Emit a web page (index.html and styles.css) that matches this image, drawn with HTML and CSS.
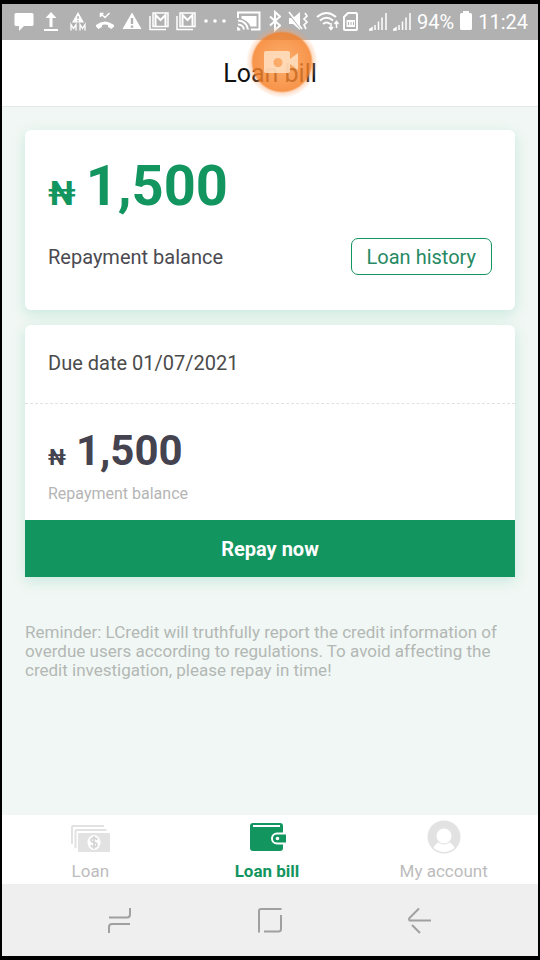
FILE: index.html
```html
<!DOCTYPE html>
<html lang="en">
<head>
<meta charset="utf-8">
<meta name="viewport" content="width=device-width, initial-scale=1">
<title>Loan bill</title>
<link rel="stylesheet" href="styles.css">
</head>
<body>
<div class="screen">
  <div class="status">
    <div class="status-group">
      <svg class="i20" viewBox="0 0 20 24"><path fill="#fff" d="M2 3h16q1.500 0 1.500 1.500v10q0 1.500-1.500 1.500h-8l-5 5v-5h-3q-1.500 0-1.500-1.500v-10q0-1.500 1.500-1.500z"/></svg>
      <svg class="i20" viewBox="0 0 20 24"><path fill="#fff" d="M10 2l5.500 6h-4v9h-3v-9h-4zM3 19h14v2h-14z"/></svg>
      <svg class="i20" viewBox="0 0 20 24"><path fill="#fff" fill-rule="evenodd" d="M10 2l6 10.500h-12zM9.300 6v3h1.400v-3zM9.300 10v1.400h1.400v-1.400z"/><path fill="none" stroke="#fff" stroke-width="1.300" d="M3 20.500v-6l2.500 4 2.500-4v6M12 20.500v-6l2.500 4 2.500-4v6"/></svg>
      <svg class="i20" viewBox="0 0 20 24"><path fill="none" stroke="#fff" stroke-width="1.500" d="M5.500 3.500l4.500 4 4.500-4.500M5.500 7V3.500h3"/><path fill="#fff" d="M1 15q9-7 18 0v1.500l-2.500 2.500-3.500-2v-2q-3-1-6 0v2l-3.500 2-2.500-2.500z"/></svg>
      <svg class="i20" viewBox="0 0 20 24"><path fill="#fff" fill-rule="evenodd" d="M10 2.500l9.500 16.500h-19zM8.800 8v6h2.400v-6zM8.800 15.500v2.300h2.400v-2.300z"/></svg>
      <svg class="i20" viewBox="0 0 20 24"><g fill="none" stroke="#fff"><path stroke-width="1.500" d="M1 6v13.500h16M4 3h15v13.500h-15z"/><path stroke-width="2" d="M6.500 16V5l5 5 5-5v11"/></g></svg>
      <svg class="i20" viewBox="0 0 20 24"><g fill="none" stroke="#fff"><path stroke-width="1.500" d="M1 6v13.500h16M4 3h15v13.500h-15z"/><path stroke-width="2" d="M6.500 16V5l5 5 5-5v11"/></g></svg>
      <svg class="i26" viewBox="0 0 26 24"><g fill="#fff"><circle cx="3" cy="11" r="1.800"/><circle cx="12" cy="11" r="1.800"/><circle cx="21" cy="11" r="1.800"/></g></svg>
      <svg class="i26" viewBox="0 0 26 24"><g fill="none" stroke="#fff" stroke-width="2"><path d="M2 8V2.500h21.500v17H15M2 10.500a10 10 0 0 1 10 9M2 14.500a6 6 0 0 1 6 5"/><path fill="#fff" stroke="none" d="M1 17q3 0 3.500 3.500h-3.500zM5.500 6h15v10.500h-6q-2-5.500-9-8z"/></g></svg>
      <svg class="i12" viewBox="0 0 12 24"><path fill="none" stroke="#fff" stroke-width="2" d="M1 6.500l10 9-5 4.500V2l5 4.500-10 9"/></svg>
      <svg class="i20" viewBox="0 0 20 24"><path fill="#fff" d="M1 8h4l7-6v18l-7-6h-4z"/><path stroke="#b1b1b1" stroke-width="1.500" d="M1 4l13 16"/><path fill="none" stroke="#fff" stroke-width="1.700" d="M1 2l13 17M17 3l2 3-3 3 3 3-3 3 2 4"/></svg>
      <svg class="i45" viewBox="0 0 45 24"><g fill="none" stroke="#fff" stroke-width="2"><path d="M2 7q9.500-8 19 0M5 10.500q6.500-5.500 13 0M8 14q3.500-3 7 0"/><path stroke-width="1.500" d="M16 13v6m-2-2l2 2.500 2-2.500M21.500 18v-6m-2 2l2-2.500 2 2.500"/><path d="M29 7v12q0 1 1 1h11q1 0 1-1V4q0-1-1-1h-8z"/></g><path fill="#fff" d="M31.500 10h8.500v7h-8.500z"/><path stroke="#b1b1b1" d="M33.500 12v3m2.500-3v3m2.500-3v3"/></svg>
    </div>
    <div class="status-group tight">
      <svg class="i18" viewBox="0 0 18 24"><path stroke="#fff" stroke-width="1.500" d="M0 20l3-2v2zM6 20v-5M9.500 20v-8.500M13 20V7.500M17 20V3"/></svg>
      <svg class="i18" viewBox="0 0 18 24"><path stroke="#fff" stroke-width="1.500" d="M0 20l3-2v2zM6 20v-5M9.500 20v-8.500M13 20V7.500M17 20V3"/></svg>
      <span>94%</span>
      <svg class="i12" viewBox="0 0 12 24"><path fill="#fff" d="M3 1h6v2h1.500q1.500 0 1.500 1.500v14q0 1.500-1.500 1.500h-9q-1.500 0-1.500-1.500v-14q0-1.500 1.500-1.500h1.500z"/></svg>
      <span>11:24</span>
    </div>
  </div>

  <header class="header">
    <h1>Loan bill</h1>
    <button class="recorder" aria-label="Screen recorder">
      <svg viewBox="0 0 36 24"><path fill="#ffe0c3" fill-opacity=".85" fill-rule="evenodd" d="M2 1h22q2 0 2 2v6l8-6v17l-8-6v7q0 2-2 2h-22q-2 0-2-2v-18q0-2 2-2zM14 8a4.500 4.500 0 1 0 .1 0z"/></svg>
    </button>
  </header>

  <main class="main">
    <section class="card summary">
      <p class="amount"><span class="naira">₦</span><span>1,500</span></p>
      <div class="row">
        <span>Repayment balance</span>
        <button class="history">Loan history</button>
      </div>
    </section>
    <section class="card bill">
      <p class="due">Due date 01/07/2021</p>
      <div class="detail">
        <p class="amount small"><span class="naira">₦</span><span>1,500</span></p>
        <p class="caption">Repayment balance</p>
      </div>
      <button class="repay">Repay now</button>
    </section>
    <p class="reminder">Reminder: LCredit will truthfully report the credit information of overdue users according to regulations. To avoid affecting the credit investigation, please repay in time!</p>
  </main>

  <nav class="tabs">
    <a href="#loan">
      <svg viewBox="0 0 40 34"><path fill="none" stroke="#e2e2e2" stroke-width="2" d="M2 21V4q0-1 1-1h31M5.500 25V8q0-1 1-1h30"/><path fill="#e2e2e2" d="M9 10h30q1 0 1 1v17q0 1-1 1h-30q-1 0-1-1v-17q0-1 1-1z"/><ellipse cx="24" cy="19.500" rx="6.500" ry="7.500" fill="#fff"/><path fill="none" stroke="#d6d6d6" stroke-width="1.800" d="M27 17q-.5-2-3-2t-3 2q0 2 3 2.500t3 2.500q-.5 2-3 2t-3-2M24 13v13"/></svg>
      <span>Loan</span>
    </a>
    <a href="#bill" class="active">
      <svg viewBox="0 0 40 34"><rect x="3" y="0" width="33" height="28" rx="3" fill="#12955f"/><path stroke="#fff" stroke-width="2" d="M6 3h27"/><path fill="#12955f" stroke="#fff" stroke-width="2" d="M39 10.500h-9a5 5 0 0 0 0 10h9"/><path fill="#12955f" d="M30 12h6q2 0 2 1.500v4q0 1.500-2 1.500h-6a3.500 3.500 0 0 1 0-7z"/><circle cx="30.500" cy="15.500" r="1.800" fill="#fff"/></svg>
      <span>Loan bill</span>
    </a>
    <a href="#account">
      <svg viewBox="0 0 40 34"><circle cx="20" cy="14" r="16.500" fill="#e2e2e2"/><circle cx="20" cy="13" r="7.500" fill="#fff"/><path fill="#fff" d="M9.500 25q1-3.500 5-5.500 5.500 4 11 0 4 2 5 5.500-10.500 8-21 0z"/></svg>
      <span>My account</span>
    </a>
  </nav>

  <div class="system">
    <button aria-label="Recent apps"><svg viewBox="0 0 28 28"><path d="M3 11.500h18q3 0 3-3V2M3 27v-6q0-3 3-3h18"/></svg></button>
    <button aria-label="Home"><svg viewBox="0 0 28 28"><path d="M3 26.500V5q0-2 2-2h20.500M8 25.500h14.500q2.500 0 2.500-2.500V9"/></svg></button>
    <button aria-label="Back"><svg viewBox="0 0 28 28"><path d="M25 14.500H3.500q-1-1.500 0-2.500l9.500-9.500M6 19l8 8"/></svg></button>
  </div>
</div>
</body>
</html>
```

FILE: styles.css
```css
* { box-sizing: border-box; }
body, h1, p { margin: 0; }
body { background: #000; font-family: Roboto, "Liberation Sans", sans-serif; }
button { font-family: inherit; cursor: pointer; }

.screen {
  min-height: 100vh;
  border: solid #000;
  border-width: 4px 2px;
  display: flex;
  flex-direction: column;
  background: #f1f7f4;
}

.status {
  height: 36px;
  padding: 0 10px 0 12px;
  background: #b1b1b1;
  color: #fff;
  display: flex;
  align-items: center;
  justify-content: space-between;
  font-size: 20px;
}
.status-group { display: flex; align-items: center; gap: 7px; }
.tight { gap: 6px; }
.status svg { height: 24px; flex: none; }
.i12 { width: 12px; }
.i18 { width: 18px; }
.i20 { width: 20px; }
.i26 { width: 26px; }
.i45 { width: 45px; }

.header {
  position: relative;
  height: 67px;
  padding-top: 2px;
  display: flex;
  align-items: center;
  justify-content: center;
  background: #fff;
  border-bottom: 1px solid #e4e9e6;
}
.header h1 { font-size: 25px; line-height: 32px; font-weight: 400; color: #111; }
.recorder {
  position: absolute;
  top: -14px;
  left: 50%;
  width: 72px;
  height: 72px;
  margin-left: -24px;
  padding: 0;
  border: 0;
  border-radius: 50%;
  background: radial-gradient(circle, rgba(250, 150, 66, .76) 0, rgba(246, 128, 40, .84) 29px, rgba(250, 160, 100, .35) 31px, rgba(255, 190, 150, 0) 36px);
}
.recorder svg { display: block; width: 36px; height: 24px; margin: 0 auto; }

.main { flex: 1; padding: 23px; }
.card {
  background: #fff;
  border-radius: 6px;
  box-shadow: 0 4px 14px rgba(18, 170, 120, .18);
}
.summary { padding: 24px 23px 35px; margin-bottom: 15px; }
.amount {
  display: flex;
  align-items: baseline;
  gap: 10px;
  font-size: 56px;
  line-height: 64px;
  font-weight: 700;
  color: #12955f;
}
.naira { font-size: 34px; line-height: 1; }
.row {
  display: flex;
  align-items: center;
  justify-content: space-between;
  margin-top: 20px;
  font-size: 20px;
  color: #4b4a52;
}
.history {
  height: 37px;
  padding: 0 15px;
  border: 1px solid #12955f;
  border-radius: 7px;
  background: #fff;
  color: #278a63;
  font-size: 20px;
}
.bill { border-radius: 6px 6px 0 0; }
.due {
  padding: 25px 23px 27px;
  font-size: 20px;
  line-height: 26px;
  color: #4b4b4b;
  border-bottom: 1px dashed #e2e2e2;
}
.detail { padding: 22px 23px 16px; }
.small { font-size: 42px; line-height: 50px; color: #45434f; }
.small .naira { font-size: 22px; }
.caption { margin-top: 8px; font-size: 16px; line-height: 20px; color: #b5b5b5; }
.repay {
  display: block;
  width: 100%;
  height: 57px;
  border: 0;
  background: #12955f;
  color: #fff;
  font-size: 20px;
  font-weight: 700;
}
.reminder { margin-top: 46px; font-size: 17px; line-height: 19px; color: #b3b8b5; }

.tabs { display: grid; grid-template-columns: repeat(3, 1fr); background: #fff; height: 69px; padding-right: 6px; }
.tabs a {
  display: flex;
  flex-direction: column;
  align-items: center;
  padding-top: 8px;
  color: #bcbcbc;
  font-size: 17px;
  line-height: 22px;
  text-decoration: none;
}
.tabs svg { width: 40px; height: 34px; margin-bottom: 3px; overflow: visible; }
.tabs .active { color: #12955f; font-weight: 700; }

.system {
  height: 72px;
  padding: 0 43px;
  display: grid;
  grid-template-columns: repeat(3, 1fr);
  align-items: center;
  justify-items: center;
  background: #efefef;
}
.system button { padding: 0; border: 0; background: none; }
.system svg { display: block; width: 28px; height: 28px; fill: none; stroke: #a0a0a0; stroke-width: 2; }
```
